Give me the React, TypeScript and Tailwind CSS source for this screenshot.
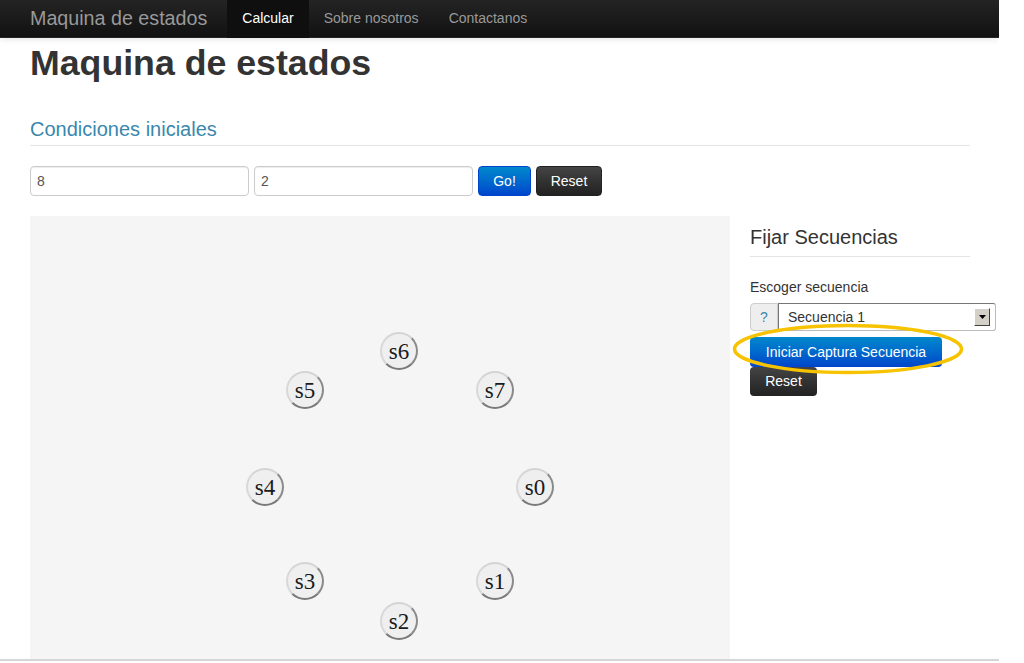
import React from 'react';

const nodes = [
  { id: 's6', x: 369, y: 135 },
  { id: 's5', x: 275, y: 174 },
  { id: 's7', x: 465, y: 174 },
  { id: 's4', x: 235, y: 271 },
  { id: 's0', x: 505, y: 271 },
  { id: 's3', x: 275, y: 365 },
  { id: 's1', x: 465, y: 365 },
  { id: 's2', x: 369, y: 405 },
];

const StateNode: React.FC<{ id: string; x: number; y: number }> = ({ id, x, y }) => (
  <div
    className="absolute w-[38px] h-[38px] -ml-[19px] -mt-[19px] rounded-full bg-[#efefef] border-2 border-t-[#d4d4d4] border-l-[#d8d8d8] border-r-[#8a8a8a] border-b-[#7a7a7a] flex items-center justify-center text-[23px] leading-none text-[#1a1a1a] font-['Liberation_Serif',serif]"
    style={{ left: x, top: y }}
  >
    {id}
  </div>
);

export default function App() {
  return (
    <div className="w-[999px] h-[663px] overflow-hidden bg-white font-['Liberation_Sans',Arial,sans-serif] text-[#333]">
      <div className="h-[661px] border-b-2 border-[#d6d6d6] overflow-hidden">
        <nav className="h-[38px] bg-gradient-to-b from-[#242424] to-[#111] border-b border-[#252525] shadow-[0_1px_6px_rgba(0,0,0,0.12)] flex items-center pl-[30px]">
          <span className="text-[19.7px] text-[#999] mr-[20px]">Maquina de estados</span>
          <a className="h-[38px] px-[15px] flex items-center text-[14px] text-white bg-[#0f0f0f]">Calcular</a>
          <a className="h-[38px] px-[15px] flex items-center text-[14px] text-[#999]">Sobre nosotros</a>
          <a className="h-[38px] px-[15px] flex items-center text-[14px] text-[#999]">Contactanos</a>
        </nav>

        <div className="px-[30px] w-[1000px]">
          <h1 className="text-[35.7px] font-bold leading-[40px] text-[#333] mt-[5px]">Maquina de estados</h1>

          <div className="w-[940px] mt-[34px] border-b border-[#e5e5e5] pb-[4px]">
            <h3 className="text-[20px] leading-[24px] text-[#3a87ad]">Condiciones iniciales</h3>
          </div>

          <div className="flex items-center gap-[5px] mt-[20px]">
            <input
              defaultValue="8"
              className="w-[219px] h-[30px] border border-[#ccc] rounded-[4px] px-[6px] text-[14px] text-[#555] shadow-[inset_0_1px_1px_rgba(0,0,0,0.075)]"
            />
            <input
              defaultValue="2"
              className="w-[219px] h-[30px] border border-[#ccc] rounded-[4px] px-[6px] text-[14px] text-[#555] shadow-[inset_0_1px_1px_rgba(0,0,0,0.075)]"
            />
            <button className="w-[53px] h-[30px] rounded-[4px] bg-gradient-to-b from-[#0088cc] to-[#0044cc] border border-[#0044cc] text-white text-[14px]">Go!</button>
            <button className="w-[66px] h-[30px] rounded-[4px] bg-gradient-to-b from-[#444] to-[#222] border border-[#222] text-white text-[14px]">Reset</button>
          </div>

          <div className="flex gap-[20px] mt-[20px]">
            <div className="relative w-[700px] h-[460px] bg-[#f5f5f5]">
              {nodes.map(n => (
                <StateNode key={n.id} {...n} />
              ))}
            </div>

            <div className="relative w-[220px]">
              <div className="border-b border-[#e5e5e5] pb-[8px] mt-[10px]">
                <h3 className="text-[20px] leading-[22px] text-[#333]">Fijar Secuencias</h3>
              </div>
              <div className="text-[14px] leading-[20px] mt-[20px]">Escoger secuencia</div>
              <div className="flex mt-[6px] h-[28px] w-[246px]">
                <div className="w-[28px] h-[28px] bg-[#eee] border border-[#ccc] rounded-l-[4px] flex items-center justify-center text-[14px] text-[#3a87ad]">?</div>
                <div className="flex-1 h-[28px] border border-[#bbb] border-l-[#777] border-t-[#777] rounded-r-[3px] bg-white flex items-center pl-[9px] pr-[5px]">
                  <span className="flex-1 text-[14px] text-[#333]">Secuencia 1</span>
                  <div className="w-[16px] h-[18px] bg-[#d4d0c8] border border-t-white border-l-white border-r-[#404040] border-b-[#404040] flex items-center justify-center">
                    <svg width="7" height="4" viewBox="0 0 7 4"><path d="M0 0h7L3.5 4z" fill="#000" /></svg>
                  </div>
                </div>
              </div>
              <button className="block mt-[6px] w-[192px] h-[30px] rounded-[4px] bg-gradient-to-b from-[#0088cc] to-[#0044cc] text-white text-[14px]">Iniciar Captura Secuencia</button>
              <button className="block w-[67px] h-[29px] rounded-[4px] bg-gradient-to-b from-[#444] to-[#222] text-white text-[14px]">Reset</button>

              <svg className="absolute left-[-18px] top-[107px]" width="232" height="52" viewBox="0 0 232 52">
                <ellipse cx="116" cy="26" rx="113.5" ry="23.5" fill="none" stroke="#f7c300" strokeWidth="3.5" />
              </svg>
            </div>
          </div>
        </div>
      </div>
    </div>
  );
}
